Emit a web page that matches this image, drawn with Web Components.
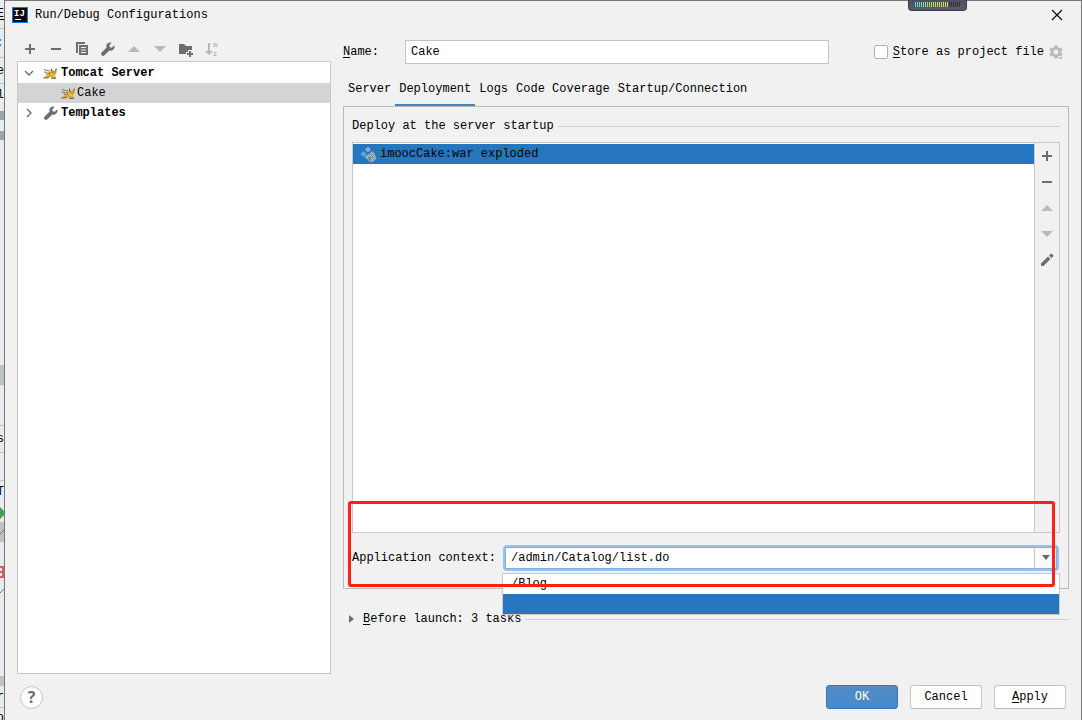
<!DOCTYPE html>
<html lang="en">
<head>
<meta charset="utf-8">
<title>Run/Debug Configurations</title>
<style>
html, body { margin: 0; height: 100%; }
body {
  --bg: #f1f1f1; --line: #c9c9c9; --frame: #bababa; --blue: #2675bf; --ink: #6e6e6e; --off: #b9b9b9;
  font: 12px/20px "Liberation Mono", monospace; color: #000; background: #e8ebeb; overflow: hidden;
}
</style>
</head>
<body>
<app-desktop></app-desktop>
<script>
const ICONS = {
  plus: '<path d="M7 3h2v4h4v2H9v4H7V9H3V7h4z"/>',
  minus: '<path d="M3 7h10v2H3z"/>',
  copy: '<path d="M2 1h9v2H4v9H2z"/><path fill-rule="evenodd" d="M5 4h9v10H5zM7 6v1h5V6zM7 8.500v1h5v-1zM7 11v1h5v-1z"/>',
  wrench: '<path d="M14.2 4.3 11.8 6.700 9.800 6.200 9.300 4.200 11.700 1.800C9.800 1 7.500 1.700 6.700 3.500 6.200 4.600 6.200 5.600 6.600 6.600L1.600 11.600C.8 12.400.8 13.600 1.600 14.300 2.400 15.100 3.600 15.100 4.400 14.300L9.400 9.400C10.500 9.900 11.800 9.700 12.800 9 14.500 7.900 14.900 5.900 14.200 4.300Z"/>',
  up: '<path d="M8 5l6 6H2z"/>',
  down: '<path d="M2 5h12l-6 6z"/>',
  folder: '<path d="M1 3h5l2 2h6v4h-4v2H8v2H1z"/><path d="M11 10h2v2h2v2h-2v2h-2v-2H9v-2h2z"/>',
  sort: '<path d="M4 2h2v8h3l-4 4-4-4h3z"/><text x="9" y="6" font-family="Liberation Sans,sans-serif" font-weight="700" font-size="8">a</text><text x="9" y="15" font-family="Liberation Sans,sans-serif" font-weight="700" font-size="8">z</text>',
  pencil: '<path d="M2 11.500 9 4.500 11.500 7 4.500 14H2zM10 3.500 11.500 2Q12.300 1.300 13.200 2L14.100 3Q14.700 3.800 14 4.600L12.500 6z"/>',
  open: '<path d="M4 6l4 4 4-4" fill="none" stroke="currentColor" stroke-width="1.400"/>',
  closed: '<path d="M6 4l4 4-4 4" fill="none" stroke="currentColor" stroke-width="1.400"/>',
  play: '<path d="M6 4l5 4-5 4z"/>',
  close: '<path d="M3 3l10 10M13 3L3 13" fill="none" stroke="currentColor" stroke-width="1.300"/>',
  gear: '<path fill-rule="evenodd" d="M6.500 1.500h3l.4 2 1.300.7 1.900-.7 1.500 2.600-1.500 1.300v1.400l1.500 1.300-1 1.700h-1.800l-.8.3-1.100.5-.4 2h-3l-.4-2-1.300-.7-1.900.7-1.500-2.600 1.500-1.300V7.400L1.400 6.100l1.500-2.600 1.900.7 1.300-.7zM8 5.500a2.500 2.500 0 1 0 0 5 2.500 2.500 0 0 0 0-5z"/><path d="M10 13h5l-2.500 2.500z"/>',
  tomcat: '<path d="M5 7.500 7.500 6.500 8 4l1.500 1.500H12L13.500 4v4L12.500 9.500 11.500 11l1.500 1v1H9l-2-1.500L4 13H1v-1l3-1.500z" fill="#d6a52c"/><path d="M1 4.500l3 1 3 .5M1 7l3 .5M0 13h4l2.500-1M8 13.500h5M3 10l2-2.500M6 9l2-1" stroke="#5d5848" stroke-width=".8" fill="none"/><path d="M8 3v3l1.500-1zM13.500 3v3L12 5z" fill="#675624"/><path d="M9 7h1M11.500 7h1" stroke="#4f8b34"/><path d="M7 8.500l3 1.500 1 1" stroke="#f3dda0" fill="none"/>',
  artifact: '<path d="M8 .500l3 3-3 3-3-3z" fill="#9aa7b0"/><path d="M3.500 5l3 3-3 3-3-3z" fill="#40b6e0"/><path d="M12 5l3 2.500-3 .5-1.500-1zM7 8.500l1 1-1 4-2.500-2.500z" fill="#9aa7b0"/><circle cx="11.500" cy="11.500" r="3.800" fill="#5f83a8" stroke="#a9b7c2" stroke-width="1.200"/><path d="M8.500 10l2.500 0 1 1.500-1 2M12 8.500l.5 1.500 2 .5M12.500 14.500v-1.500l2-.5" stroke="#c2ccd3" fill="none"/>',
  idea: '<path d="M0 0h16v16H0z" fill="#087cfa"/><path d="M1 1h14v14H1z" fill="#080808"/><path d="M3 12h6v1H3z" fill="#fff"/><text x="2" y="9" fill="#fff" font-family="Liberation Mono,monospace" font-size="9" font-weight="700">IJ</text>'
};

function define(name, css, html, setup) {
  const tpl = document.createElement('template');
  tpl.innerHTML = `<style>*{box-sizing:border-box}button,input{font:inherit;color:inherit;margin:0;padding:0}u{text-underline-offset:2px}${css}</style>${html}`;
  customElements.define(name, class extends HTMLElement {
    constructor() { super(); this.attachShadow({ mode: 'open' }).append(tpl.content.cloneNode(true)); }
    connectedCallback() { if (setup) setup(this, this.shadowRoot); }
  });
}

define('ui-icon', `:host{display:block;flex:none;width:16px;height:16px;color:var(--ink)}svg{display:block;width:100%;height:100%;fill:currentColor}:host([off]){color:var(--off)}`,
  `<svg viewBox="0 0 16 16" aria-hidden="true"></svg>`,
  (el, r) => { r.querySelector('svg').innerHTML = ICONS[el.getAttribute('name')] || ''; });

define('tool-button', `:host{display:block}button{display:grid;place-items:center;width:26px;height:26px;border:0;background:none}`,
  `<button type="button"><ui-icon></ui-icon></button>`,
  (el, r) => {
    const off = el.hasAttribute('off'), b = r.querySelector('button'), old = r.querySelector('ui-icon');
    b.disabled = off; b.setAttribute('aria-label', el.getAttribute('label'));
    const i = document.createElement('ui-icon'); i.setAttribute('name', el.getAttribute('icon'));
    if (off) i.setAttribute('off', ''); old.replaceWith(i);
  });

define('push-button', `:host{display:block}button{display:block;width:72px;height:24px;border:1px solid #c4c4c4;border-bottom-color:#b5b5b5;border-radius:3px;background:#fff;line-height:20px}
  :host([primary]) button{background:linear-gradient(#528cc7,#4989cc);border-color:#3d75b2;color:#fff}`,
  `<button type="button"><slot></slot></button>`);

define('section-title', `:host{display:flex;align-items:center;height:20px;gap:4px}i{flex:1;border-top:1px solid #d1d1d1}`,
  `<span><slot></slot></span><i></i>`);

define('title-bar', `:host{display:flex;align-items:center;height:27px;padding:0 16px 0 7px;gap:7px}h1{flex:1;margin:0;font:inherit}button{border:0;background:none}ui-icon{color:#111}`,
  `<ui-icon name="idea"></ui-icon><h1><slot></slot></h1><button type="button" aria-label="Close"><ui-icon name="close"></ui-icon></button>`);

define('tree-row', `:host{display:flex;align-items:center;height:20px;padding-left:3px;font-weight:700}
  :host([level="2"]){padding-left:41px;font-weight:400}:host([selected]){background:#d4d4d4}.mark{margin-right:6px}.kind{margin-right:2px}
  :host([level="2"]) .kind{margin:0 0 0 2px}`,
  `<ui-icon class="mark"></ui-icon><ui-icon class="kind"></ui-icon><slot></slot>`,
  (el, r) => {
    el.setAttribute('role', 'treeitem');
    for (const k of ['mark', 'kind']) {
      const old = r.querySelector('.' + k), n = el.getAttribute(k);
      if (!n) { old.remove(); continue; }
      const i = document.createElement('ui-icon'); i.className = k; i.setAttribute('name', n); old.replaceWith(i);
    }
  });

define('config-sidebar', `:host{display:flex;flex-direction:column;width:314px;flex:none}
  nav{display:flex;align-items:center;height:25px}.tree{flex:1;background:#fff;border:1px solid var(--line);padding-top:1px}`,
  `<nav><tool-button icon="plus" label="Add"></tool-button><tool-button icon="minus" label="Remove"></tool-button>
  <tool-button icon="copy" label="Copy"></tool-button><tool-button icon="wrench" label="Edit templates"></tool-button>
  <tool-button icon="up" label="Move up" off></tool-button><tool-button icon="down" label="Move down" off></tool-button>
  <tool-button icon="folder" label="New folder"></tool-button><tool-button icon="sort" label="Sort" off></tool-button></nav>
  <div class="tree" role="tree"><tree-row mark="open" kind="tomcat">Tomcat Server</tree-row>
  <tree-row level="2" kind="tomcat" selected>Cake</tree-row><tree-row mark="closed" kind="wrench">Templates</tree-row></div>`);

define('name-row', `:host{display:flex;align-items:center;height:24px;padding-right:5px}
  .name{width:62px}.box{flex:1;height:24px;min-width:0;border:1px solid #c4c4c4;background:#fff;padding:0 5px}
  input[type=checkbox]{appearance:none;width:14px;height:14px;background:#fff;border:1px solid #b0b0b0;border-radius:2px;margin:0 5px 0 45px}ui-icon{margin-left:4px}`,
  `<label class="name" for="n"><u>N</u>ame:</label><input class="box" id="n" value="Cake">
  <input type="checkbox" id="s"><label for="s"><u>S</u>tore as project file</label><ui-icon name="gear" off></ui-icon>`);

define('tab-strip', `:host{display:flex;height:30px;padding-left:1px}button{height:31px;padding:0 4px 3px;border:0;border-bottom:3px solid transparent;background:none}
  button[aria-selected=true]{border-color:#4083c9}`,
  `<button role="tab">Server</button><button role="tab" aria-selected="true">Deployment</button><button role="tab">Logs</button><button role="tab">Code Coverage</button><button role="tab">Startup/Connection</button>`,
  el => el.setAttribute('role', 'tablist'));

define('artifact-list', `:host{display:flex;border:1px solid var(--line);background:#fff}
  .items{flex:1;padding-top:1px}.item{display:flex;align-items:center;height:20px;gap:4px;padding-left:7px;background:var(--blue)}
  nav{width:25px;border-left:1px solid var(--line);background:var(--bg);display:flex;flex-direction:column;align-items:center}`,
  `<div class="items" role="listbox"><div class="item" role="option" aria-selected="true"><ui-icon name="artifact"></ui-icon><slot></slot></div></div>
  <nav><tool-button icon="plus" label="Add"></tool-button><tool-button icon="minus" label="Remove"></tool-button><tool-button icon="up" label="Up" off></tool-button><tool-button icon="down" label="Down" off></tool-button><tool-button icon="pencil" label="Edit"></tool-button></nav>`);

define('context-combo', `:host{display:flex;align-items:center;height:26px}label{flex:none;width:151px}
  .combo{position:relative;flex:1;display:flex;height:26px;border:2px solid #97c3f3;border-radius:4px;background:#fff}
  input{flex:1;min-width:0;border:1px solid #87afda;border-right:0;background:#fff;padding:0 5px;outline:0}
  button{width:23px;border:1px solid #87afda;border-left-color:#c4c4c4;background:#fafafa;display:grid;place-items:center}
  svg{display:block;fill:#666}
  .menu{position:absolute;left:-3px;right:-3px;top:26px;margin:0;padding:0;list-style:none;background:#fff;border:1px solid var(--line)}
  li{height:20px;padding:0 8px}li[aria-selected=true]{background:var(--blue)}`,
  `<label for="c">Application context:</label><div class="combo"><input id="c" role="combobox" aria-expanded="true" value="/admin/Catalog/list.do">
  <button type="button" aria-label="Show options"><svg width="10" height="6"><path d="M1 0h8l-4 5z"/></svg></button>
  <ul class="menu" role="listbox"><li role="option">/Blog</li><li role="option" aria-selected="true"></li></ul></div>`);

define('deploy-panel', `:host{position:relative;z-index:1;flex:1;display:flex;flex-direction:column;border:1px solid var(--frame);padding:9px 8px 17px}
  artifact-list{flex:1;margin:6px 0 12px}context-combo{margin-right:1px}
  .callout{position:absolute;left:4px;right:13px;bottom:1px;height:86px;border:3px solid #ff2014;border-radius:3px;pointer-events:none}`,
  `<section-title>Deploy at the server startup</section-title><artifact-list>imoocCake:war exploded</artifact-list><context-combo></context-combo><div class="callout"></div>`);

define('launch-row', `:host{display:flex;align-items:center}ui-icon{margin-right:4px}section-title{flex:1}`,
  `<ui-icon name="play"></ui-icon><section-title><u>B</u>efore launch: 3 tasks</section-title>`);

define('config-editor', `:host{display:flex;flex-direction:column;flex:1;min-width:0;padding:4px 0 45px}tab-strip{margin-top:12px}launch-row{margin-top:20px}`,
  `<name-row></name-row><tab-strip></tab-strip><deploy-panel></deploy-panel><launch-row></launch-row>`);

define('dialog-footer', `:host{display:flex;align-items:center;height:46px;padding:0 15px;gap:12px}
  .help{width:23px;height:23px;border:1px solid #c4c4c4;border-radius:50%;background:#fff;color:var(--ink);font:700 16px/20px "Open Sans",sans-serif;margin-right:auto}`,
  `<button class="help" type="button" aria-label="Help">?</button><push-button primary>OK</push-button><push-button>Cancel</push-button><push-button><u>A</u>pply</push-button>`);

define('run-dialog', `:host{display:flex;flex-direction:column;flex:1;min-width:0;background:var(--bg);border:1px solid #777;border-bottom:0}
  main{flex:1;display:flex;gap:12px;padding:8px 12px 0}`,
  `<title-bar>Run/Debug Configurations</title-bar><main><config-sidebar></config-sidebar><config-editor></config-editor></main><dialog-footer></dialog-footer>`);

/* The sliver of the IDE window that stays visible beside the dialog. */
define('ide-edge', `:host{display:flex;flex-direction:column;width:4px;flex:none;overflow:hidden;background:#e8ebeb}
  div{flex:none;display:flex;align-items:center;justify-content:flex-end;white-space:nowrap;overflow:hidden}
  .l{border-bottom:1px solid #c4c6c6}.g{background:#bfc1c1}.b{background:#9da5ae}svg{display:block;flex:none}`,
  `<div class="l" style="height:29px"><u>E</u></div><div class="l" style="height:29px;color:#3c8bdc">:</div><div class="l" style="height:26px">e</div><div style="height:22px">l</div>
  <div style="height:5px"></div><div class="b" style="height:9px"></div><div style="height:11px"></div><div class="b" style="height:9px"></div><div style="height:225px"></div>
  <div class="g" style="height:20px"></div><div class="l" style="height:41px"></div><div class="l" style="height:27px">s</div><div class="l" style="height:28px"></div><div style="height:22px">T</div>
  <div style="height:19px"><svg width="4" height="12"><path d="M0 0l4 4v4l-4 4z" fill="#499c54"/></svg></div>
  <div class="g" style="height:20px"><svg width="4" height="8"><path d="M0 6l4-4" stroke="#6e6e6e"/></svg></div><div style="height:24px"></div>
  <div style="height:12px"><svg width="4" height="12"><path d="M0 1h4M0 6h4M0 11h4M3 1v10" stroke="#db5860" stroke-width="2"/></svg></div>
  <div style="height:26px"><svg width="4" height="8"><path d="M0 6l4-4" stroke="#6e6e6e"/></svg></div><div style="height:72px"></div>
  <div class="g" style="height:10px"></div><div class="l" style="height:22px">r</div><div style="height:20px">o</div>`);

define('level-meter', `:host{display:block;width:59px;height:11px;background:linear-gradient(#4b4f5e,#5a5e6b);border:1px solid #3b3d4d;border-top:0;border-radius:0 0 4px 4px;box-sizing:border-box}
  i{display:block;height:5px;margin:2px 6px 0;background:repeating-linear-gradient(90deg,transparent 0 1px,#525664 1px 2px),linear-gradient(90deg,#5fd8cf,#b5e07c 17px,#f0cf5a 34px,#30323f 34px)}`,
  `<i></i>`);

define('app-desktop', `:host{display:flex;height:100vh;position:relative}level-meter{position:absolute;top:0;right:115px;z-index:2}`,
  `<ide-edge></ide-edge><run-dialog role="dialog"></run-dialog><level-meter></level-meter>`);
</script>
</body>
</html>
